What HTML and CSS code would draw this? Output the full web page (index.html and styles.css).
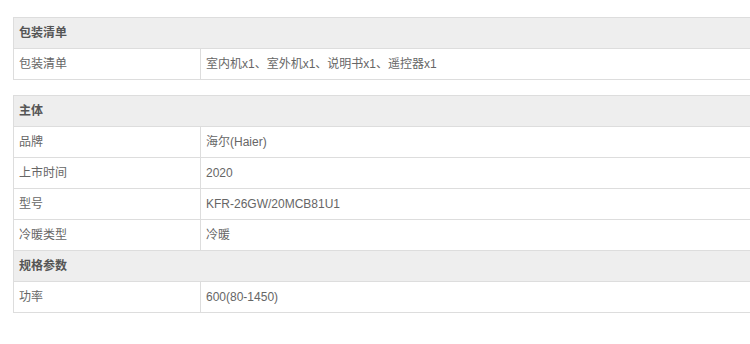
FILE: index.html
```html
<!DOCTYPE html>
<html lang="zh-CN">
<head>
    <meta charset="UTF-8">
    <meta name="viewport" content="width=device-width, initial-scale=1.0">
    <title>规格参数</title>
    <link rel="stylesheet" href="styles.css">
</head>
<body>
    <div class="spec-wrap">
        <table class="spec-table">
            <colgroup><col class="key-col"><col></colgroup>
            <tr class="group"><th colspan="2">包装清单</th></tr>
            <tr><td>包装清单</td><td>室内机x1、室外机x1、说明书x1、遥控器x1</td></tr>
        </table>

        <table class="spec-table">
            <colgroup><col class="key-col"><col></colgroup>
            <tr class="group"><th colspan="2">主体</th></tr>
            <tr><td>品牌</td><td>海尔(Haier)</td></tr>
            <tr><td>上市时间</td><td>2020</td></tr>
            <tr><td>型号</td><td>KFR-26GW/20MCB81U1</td></tr>
            <tr><td>冷暖类型</td><td>冷暖</td></tr>
            <tr class="group"><th colspan="2">规格参数</th></tr>
            <tr><td>功率</td><td>600(80-1450)</td></tr>
        </table>
    </div>
</body>
</html>
```

FILE: styles.css
```css
html, body {
    margin: 0;
    background: #fff;
}
.spec-wrap {
    width: 750px;
    overflow: hidden;
    box-sizing: border-box;
    padding: 17px 0 0 13px;
    font-family: "Liberation Sans", "Noto Sans CJK SC", sans-serif;
    font-size: 12px;
    line-height: 14px;
    color: #666;
}
.spec-table {
    width: 800px;
    table-layout: fixed;
    border-collapse: collapse;
    margin-bottom: 15px;
}
.spec-table .key-col {
    width: 187px;
}
.spec-table th,
.spec-table td {
    border: 1px solid #ddd;
    height: 31px;
    padding: 0 5px;
    box-sizing: border-box;
    text-align: left;
    vertical-align: middle;
}
.spec-table th {
    background: #eee;
    font-weight: bold;
    color: #555;
}
```
